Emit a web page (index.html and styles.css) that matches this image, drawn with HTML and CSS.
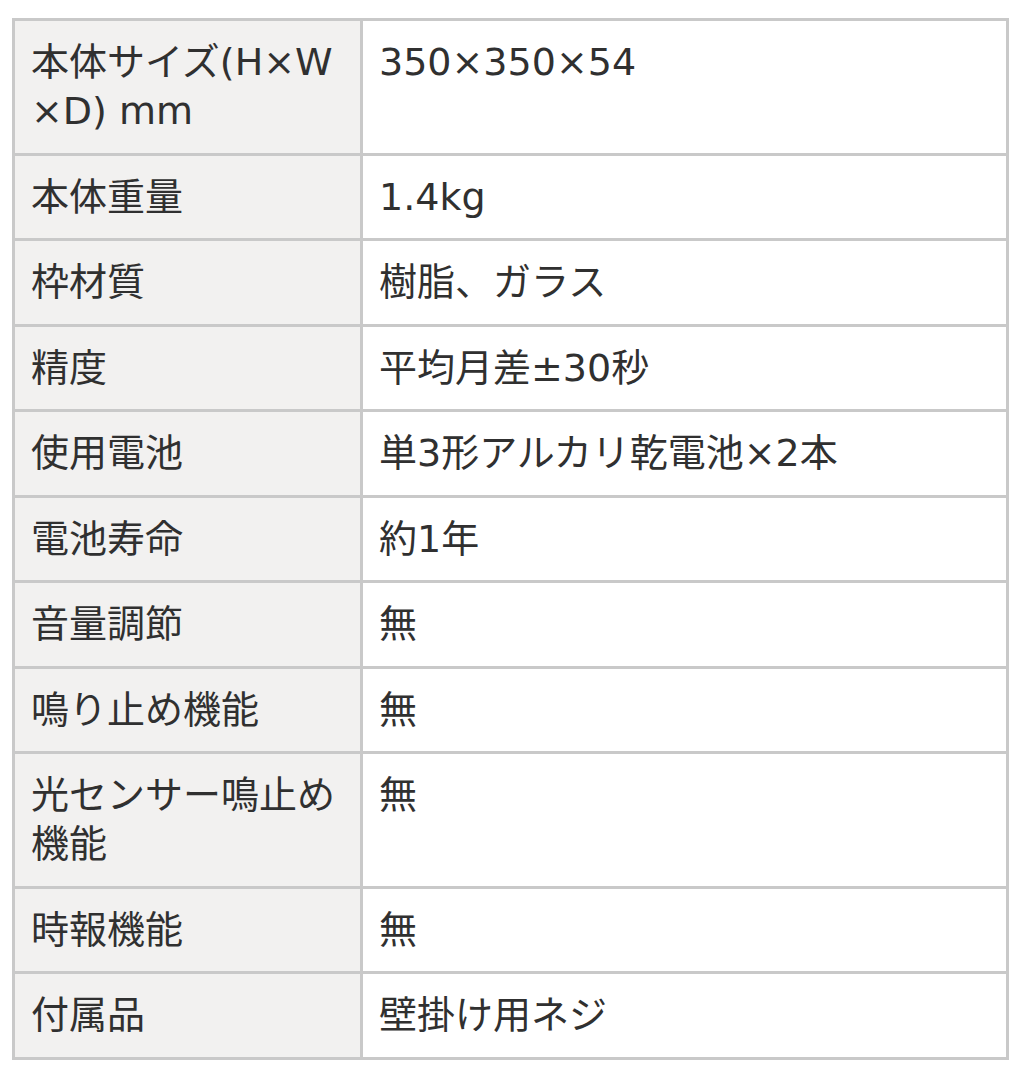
FILE: index.html
```html
<!DOCTYPE html>
<html lang="ja">
<head>
<meta charset="utf-8">
<link rel="stylesheet" href="styles.css">
</head>
<body>
<table class="spec">
  <tbody>
    <tr><th>本体サイズ(H×W×D) mm</th><td>350×350×54</td></tr>
    <tr><th>本体重量</th><td>1.4kg</td></tr>
    <tr><th>枠材質</th><td>樹脂、ガラス</td></tr>
    <tr><th>精度</th><td>平均月差±30秒</td></tr>
    <tr><th>使用電池</th><td>単3形アルカリ乾電池×2本</td></tr>
    <tr><th>電池寿命</th><td>約1年</td></tr>
    <tr><th>音量調節</th><td>無</td></tr>
    <tr><th>鳴り止め機能</th><td>無</td></tr>
    <tr><th>光センサー鳴止め機能</th><td>無</td></tr>
    <tr><th>時報機能</th><td>無</td></tr>
    <tr><th>付属品</th><td>壁掛け用ネジ</td></tr>
  </tbody>
</table>
</body>
</html>
```

FILE: styles.css
```css
html, body {
  margin: 0;
  padding: 0;
  background: #ffffff;
}
body {
  padding: 18px 9px 0 12px;
  font-family: "DejaVu Sans", "Noto Sans CJK JP", sans-serif;
  color: #303030;
}
.spec {
  width: 997px;
  border-collapse: collapse;
  table-layout: fixed;
  border: 3px solid #c9c9c9;
}
.spec th,
.spec td {
  border: 3px solid #c9c9c9;
  font-size: 38px;
  line-height: 49px;
  font-weight: 400;
  text-align: left;
  vertical-align: top;
  padding: 17px 16px 16.5px 16px;
  word-break: break-all;
}
.spec th {
  width: 313px;
  background: #f2f1f0;
}
.spec td {
  background: #ffffff;
}
```
